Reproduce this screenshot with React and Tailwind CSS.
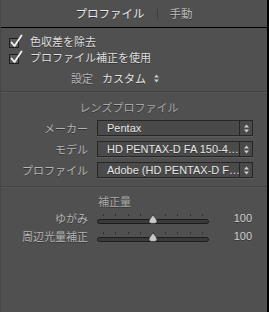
import React from "react";

const jp = { fontFamily: '"Noto Sans CJK JP", "Noto Sans", sans-serif' };
const lat = { fontFamily: '"Liberation Sans", "Noto Sans CJK JP", sans-serif' };

function Check() {
  return (
    <span className="relative inline-block w-[10px] h-[10px] border border-[#1e1e1e] bg-[#5a5a5a] shrink-0">
      <svg className="absolute -left-[1px] -top-[5px]" width="14" height="14" viewBox="0 0 14 14">
        <path d="M2.5 8.5 L5.5 12 L12.5 1.5" fill="none" stroke="#f2f2f2" strokeWidth="1.8" strokeLinecap="round" strokeLinejoin="round" />
      </svg>
    </span>
  );
}

function Updown({ color = "#cfcfcf" }) {
  return (
    <svg width="5" height="9" viewBox="0 0 5 9">
      <path d="M0 3.5 L2.5 0.5 L5 3.5 Z" fill={color} />
      <path d="M0 5.5 L2.5 8.5 L5 5.5 Z" fill={color} />
    </svg>
  );
}

function SelectRow({ label, value }) {
  return (
    <div className="flex items-center h-[16px]">
      <div className="w-[88px] text-right text-[11px] leading-none text-[#b4b4b4] pr-[1px]" style={jp}>{label}</div>
      <div className="ml-[8px] w-[156px] h-[16px] flex border border-[#262626] bg-[#4a4a4a] shadow-[0_1px_0_#5c5c5c]">
        <div className="flex-1 flex items-center pl-[9px] text-[11px] leading-none text-[#e6e6e6] whitespace-nowrap overflow-hidden" style={lat}>{value}</div>
        <div className="w-[13px] border-l border-[#262626] flex items-center justify-center">
          <Updown />
        </div>
      </div>
    </div>
  );
}

function Slider({ label }) {
  const ticks = [0, 1, 2, 3, 4, 5, 6, 7, 8];
  return (
    <div className="flex items-center h-[18px]">
      <div className="w-[88px] text-right text-[11px] leading-none text-[#b4b4b4] pr-[1px]" style={jp}>{label}</div>
      <div className="ml-[8px] relative w-[112px] h-[18px]">
        <div className="absolute left-[6px] right-[6px] top-[5px] flex justify-between">
          {ticks.map((t) => (
            <span key={t} className="w-px h-[2px] bg-[#2e2e2e]" />
          ))}
        </div>
        <div className="absolute left-0 right-0 top-[10px] h-[5px] rounded-full border border-[#1c1c1c] bg-[#3a3a3a]" />
        <svg className="absolute left-[51px] top-[5px]" width="10" height="10" viewBox="0 0 10 10">
          <path d="M5 0.5 C6 3 9 5 9 7.5 C9 9 7.5 9.5 5 9.5 C2.5 9.5 1 9 1 7.5 C1 5 4 3 5 0.5 Z" fill="#c8c8c8" stroke="#2a2a2a" strokeWidth="0.7" />
        </svg>
      </div>
      <div className="ml-auto mr-[15px] text-[11px] leading-none text-[#d0d0d0]" style={lat}>100</div>
    </div>
  );
}

export default function App() {
  return (
    <div className="w-[269px] h-[312px] bg-[#505050] border-r-2 border-black border-l border-l-[#474747] overflow-hidden [text-shadow:0_1px_0_rgba(0,0,0,0.35)]">
      <div className="h-[28px] flex items-center justify-center border-b border-black" style={jp}>
        <span className="text-[11.5px] text-[#e8e8e8] leading-none">プロファイル</span>
        <span className="mx-[12px] w-px h-[10px] bg-[#3c3c3c]" />
        <span className="text-[11.5px] text-[#b8b8b8] leading-none">手動</span>
      </div>

      <div className="pt-[7px] pl-[8px]">
        <div className="flex items-center h-[16px] gap-[11px]">
          <Check />
          <span className="text-[11px] leading-none text-[#dedede] -mt-[3px]" style={jp}>色収差を除去</span>
        </div>
        <div className="flex items-center h-[16px] gap-[11px]">
          <Check />
          <span className="text-[11px] leading-none text-[#dedede] -mt-[3px]" style={jp}>プロファイル補正を使用</span>
        </div>
        <div className="flex items-center h-[16px] mt-[3px] pl-[62px]" style={jp}>
          <span className="text-[11px] leading-none text-[#b4b4b4]">設定</span>
          <span className="ml-[9px] text-[11px] leading-none text-[#e6e6e6]">カスタム</span>
          <span className="ml-[8px] flex items-center"><Updown color="#c8c8c8" /></span>
        </div>
      </div>

      <div className="mt-[5px] border-t border-[#444] border-b border-b-[#575757]" />

      <div className="h-[22px] flex items-center justify-center pr-[10px] text-[11px] leading-none text-[#a9a9a9]" style={jp}>
        <span className="mt-[6px]">レンズプロファイル</span>
      </div>
      <div className="mt-[5px] flex flex-col gap-[5px]">
        <SelectRow label="メーカー" value="Pentax" />
        <SelectRow label="モデル" value="HD PENTAX-D FA 150-4…" />
        <SelectRow label="プロファイル" value="Adobe (HD PENTAX-D F…" />
      </div>

      <div className="mt-[8px] border-t border-[#444] border-b border-b-[#575757]" />

      <div className="h-[16px] mt-[3px] flex items-center justify-start pl-[97px] text-[11px] leading-none text-[#a9a9a9]" style={jp}>
        <span className="mt-[4px]">補正量</span>
      </div>
      <div className="mt-[2px] flex flex-col">
        <Slider label="ゆがみ" />
        <Slider label="周辺光量補正" />
      </div>
    </div>
  );
}
